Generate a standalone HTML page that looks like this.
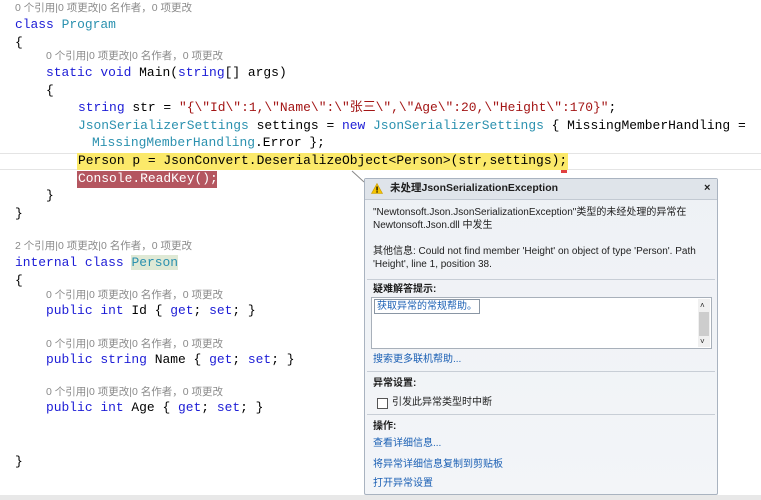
<!DOCTYPE html>
<html><head><meta charset="utf-8"><style>
body{margin:0;width:761px;height:500px;background:#fff;position:relative;overflow:hidden;font-family:"Liberation Mono","Noto Sans CJK SC",monospace;}
.l{position:absolute;white-space:pre;font-size:12.95px;line-height:17px;color:#000;}
.c{position:absolute;white-space:pre;font-family:"Liberation Sans","Noto Sans CJK SC",sans-serif;font-size:10.5px;color:#8a8a8a;line-height:13px;}
.k{color:#1c1cd6}.t{color:#2b91af}.s{color:#a31515}
.p{position:absolute;font-family:"Liberation Sans","Noto Sans CJK SC",sans-serif;font-size:10px;color:#1e1e1e;white-space:pre;line-height:13px;}
.a{color:#1a5fb4}
</style></head><body>
<div style="position:absolute;left:0;top:153px;width:761px;height:17px;border-top:1px solid #e4e4e4;border-bottom:1px solid #e4e4e4;box-sizing:border-box"></div>
<div style="position:absolute;left:77px;top:153px;width:491px;height:17px;background:#fbe96a"></div>
<div style="position:absolute;left:77px;top:171px;width:140px;height:17px;background:#b45660"></div>
<div style="position:absolute;left:561px;top:170px;width:6px;height:3px;background:#e04040"></div>

<div class="c" style="left:15px;top:2px">0 个引用|0 项更改|0 名作者，0 项更改</div>
<div class="l" style="left:15px;top:16px"><span class="k">class</span> <span class="t">Program</span></div>
<div class="l" style="left:15px;top:34px">{</div>
<div class="c" style="left:46px;top:50px">0 个引用|0 项更改|0 名作者，0 项更改</div>
<div class="l" style="left:46px;top:64px"><span class="k">static void</span> Main(<span class="k">string</span>[] args)</div>
<div class="l" style="left:46px;top:82px">{</div>
<div class="l" style="left:78px;top:99px"><span class="k">string</span> str = <span class="s">"{\"Id\":1,\"Name\":\"张三\",\"Age\":20,\"Height\":170}"</span>;</div>
<div class="l" style="left:78px;top:117px"><span class="t">JsonSerializerSettings</span> settings = <span class="k">new</span> <span class="t">JsonSerializerSettings</span> { MissingMemberHandling =</div>
<div class="l" style="left:92px;top:134px"><span class="t">MissingMemberHandling</span>.Error };</div>
<div class="l" style="left:78px;top:152px">Person p = JsonConvert.DeserializeObject&lt;Person&gt;(str,settings);</div>
<div class="l" style="left:78px;top:170px;color:#fff">Console.ReadKey();</div>
<div class="l" style="left:46px;top:187px">}</div>
<div class="l" style="left:15px;top:205px">}</div>
<div class="c" style="left:15px;top:240px">2 个引用|0 项更改|0 名作者，0 项更改</div>
<div class="l" style="left:15px;top:254px"><span class="k">internal class</span> <span class="t" style="background:#dfe9d5">Person</span></div>
<div class="l" style="left:15px;top:272px">{</div>
<div class="c" style="left:46px;top:289px">0 个引用|0 项更改|0 名作者，0 项更改</div>
<div class="l" style="left:46px;top:302px"><span class="k">public int</span> Id { <span class="k">get</span>; <span class="k">set</span>; }</div>
<div class="c" style="left:46px;top:338px">0 个引用|0 项更改|0 名作者，0 项更改</div>
<div class="l" style="left:46px;top:351px"><span class="k">public string</span> Name { <span class="k">get</span>; <span class="k">set</span>; }</div>
<div class="c" style="left:46px;top:386px">0 个引用|0 项更改|0 名作者，0 项更改</div>
<div class="l" style="left:46px;top:399px"><span class="k">public int</span> Age { <span class="k">get</span>; <span class="k">set</span>; }</div>
<div class="l" style="left:15px;top:453px">}</div>
<div style="position:absolute;left:0;top:495px;width:761px;height:5px;background:#e8e8e8"></div>

<svg style="position:absolute;left:350px;top:170px" width="20" height="20"><line x1="2" y1="1" x2="14" y2="12" stroke="#888" stroke-width="1"/></svg>
<div style="position:absolute;left:364px;top:178px;width:354px;height:317px;border:1px solid #a9b3c0;box-sizing:border-box;background:linear-gradient(#eef1f5,#f3f5f8);border-radius:2px">
 <div style="position:absolute;left:0;top:0;width:352px;height:20px;background:#dfe4ea;border-bottom:1px solid #c2c9d2"></div>
 <svg style="position:absolute;left:6px;top:4px" width="12" height="11"><path d="M6 0.5 L11.5 10.5 L0.5 10.5Z" fill="#f5c400" stroke="#c89a00" stroke-width="0.6"/><rect x="5.4" y="3.5" width="1.3" height="4" fill="#000"/><rect x="5.4" y="8.3" width="1.3" height="1.3" fill="#000"/></svg>
 <div class="p" style="left:25px;top:3px;font-weight:bold;font-size:10.5px">未处理JsonSerializationException</div>
 <div class="p" style="left:339px;top:3px;font-weight:bold;font-size:11px">×</div>
 <div class="p" style="left:8px;top:27px">"Newtonsoft.Json.JsonSerializationException"类型的未经处理的异常在
Newtonsoft.Json.dll 中发生</div>
 <div class="p" style="left:8px;top:66px">其他信息: Could not find member 'Height' on object of type 'Person'. Path
'Height', line 1, position 38.</div>
 <div style="position:absolute;left:2px;top:100px;width:348px;border-top:1px solid #c8ced6"></div>
 <div class="p" style="left:8px;top:104px;font-weight:bold">疑难解答提示:</div>
 <div style="position:absolute;left:6px;top:118px;width:341px;height:52px;background:#fff;border:1px solid #a8b0ba;box-sizing:border-box">
  <div class="p a" style="left:2px;top:1px;border:1px solid #8a96a4;padding:0 2px">获取异常的常规帮助。</div>
  <div style="position:absolute;right:1px;top:1px;width:12px;height:48px;background:#f0f0f0"><div style="position:absolute;top:13px;left:1px;width:10px;height:24px;background:#cdcdcd"></div><div class="p" style="left:2px;top:0;font-size:8px">˄</div><div class="p" style="left:2px;top:36px;font-size:8px">˅</div></div>
 </div>
 <div class="p a" style="left:8px;top:174px">搜索更多联机帮助...</div>
 <div style="position:absolute;left:2px;top:192px;width:348px;border-top:1px solid #c8ced6"></div>
 <div class="p" style="left:8px;top:198px;font-weight:bold">异常设置:</div>
 <div style="position:absolute;left:12px;top:219px;width:9px;height:9px;border:1px solid #555;background:#fff"></div>
 <div class="p" style="left:27px;top:217px">引发此异常类型时中断</div>
 <div style="position:absolute;left:2px;top:235px;width:348px;border-top:1px solid #c8ced6"></div>
 <div class="p" style="left:8px;top:241px;font-weight:bold">操作:</div>
 <div class="p a" style="left:8px;top:258px">查看详细信息...</div>
 <div class="p a" style="left:8px;top:279px">将异常详细信息复制到剪贴板</div>
 <div class="p a" style="left:8px;top:298px">打开异常设置</div>
</div>
</body></html>
